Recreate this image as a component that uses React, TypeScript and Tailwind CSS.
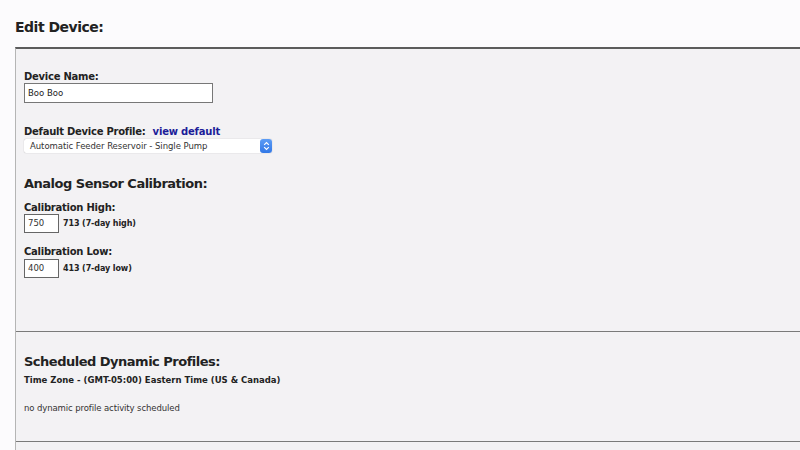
import React from "react";

const font = { fontFamily: '"DejaVu Sans", Verdana, sans-serif' };

function Label({ children }: { children: React.ReactNode }) {
  return <div className="text-[10px] font-bold leading-[12px] tracking-[-0.25px] text-[#222]">{children}</div>;
}

function CalInput({ value, note }: { value: string; note: string }) {
  return (
    <div className="flex items-center">
      <div className="flex h-[19px] w-[35px] items-center border border-[#666] bg-white pl-[3px] text-[8.5px] text-[#333]">
        {value}
      </div>
      <span className="ml-[4px] text-[8px] font-bold tracking-[-0.1px] text-[#222]">{note}</span>
    </div>
  );
}

export default function App() {
  return (
    <div className="min-h-[450px] w-[800px] overflow-hidden bg-[#fcfbfd]" style={font}>
      <div className="h-[47px] pl-[15px] pt-[18px]">
        <h1 className="text-[14px] font-bold leading-[18px] tracking-[-0.5px] text-[#222]">Edit Device:</h1>
      </div>

      <div className="ml-[15px] border-l border-t-2 border-l-[#b5b5b5] border-t-[#5c5c5c] bg-[#f3f2f4]">
        {/* Device settings */}
        <div className="h-[283px] border-b border-[#7a7a7a] pl-2 pt-[22px]">
          <Label>Device Name:</Label>
          <div className="flex h-[20px] w-[189px] items-center border border-[#777] bg-white pl-[3px] text-[8.5px] text-[#222]">
            Boo Boo
          </div>

          <div className="mt-[23px] flex items-center">
            <Label>Default Device Profile:</Label>
            <a className="ml-[7px] text-[10px] font-bold leading-[12px] tracking-[-0.2px] text-[#1c1d99]">view default</a>
          </div>
          <div className="mt-[1px] flex h-[14px] w-[248px] items-center justify-between rounded-[2px] bg-white shadow-[0_0_1px_rgba(0,0,0,0.35)]">
            <span className="pl-[6px] text-[8.5px] tracking-[-0.05px] text-[#333]">Automatic Feeder Reservoir - Single Pump</span>
            <span className="flex h-[14px] w-[12px] items-center justify-center rounded-[3px] bg-gradient-to-b from-[#5c9cf5] to-[#3278e6]">
              <svg width="7" height="10" viewBox="0 0 7 10" fill="none" stroke="white" strokeWidth="1.2">
                <path d="M1.2 3.8 L3.5 1.5 L5.8 3.8" />
                <path d="M1.2 6.2 L3.5 8.5 L5.8 6.2" />
              </svg>
            </span>
          </div>

          <h2 className="mt-[22px] text-[13px] font-bold leading-[18px] tracking-[-0.5px] text-[#222]">
            Analog Sensor Calibration:
          </h2>

          <div className="mt-[9px]">
            <Label>Calibration High:</Label>
          </div>
          <CalInput value="750" note="713 (7-day high)" />

          <div className="mt-[13px]">
            <Label>Calibration Low:</Label>
          </div>
          <div className="mt-[1px]">
            <CalInput value="400" note="413 (7-day low)" />
          </div>
        </div>

        {/* Scheduled profiles */}
        <div className="h-[110px] border-b border-[#7a7a7a] pl-2 pt-[21px]">
          <h2 className="text-[13px] font-bold leading-[18px] tracking-[-0.5px] text-[#222]">
            Scheduled Dynamic Profiles:
          </h2>
          <div className="mt-[3px] text-[8.5px] font-bold leading-[12px] text-[#222]">
            Time Zone - (GMT-05:00) Eastern Time (US &amp; Canada)
          </div>
          <div className="mt-[16px] text-[8.5px] leading-[12px] tracking-[-0.1px] text-[#333]">
            no dynamic profile activity scheduled
          </div>
        </div>
        <div className="h-[20px]" />
      </div>
    </div>
  );
}
